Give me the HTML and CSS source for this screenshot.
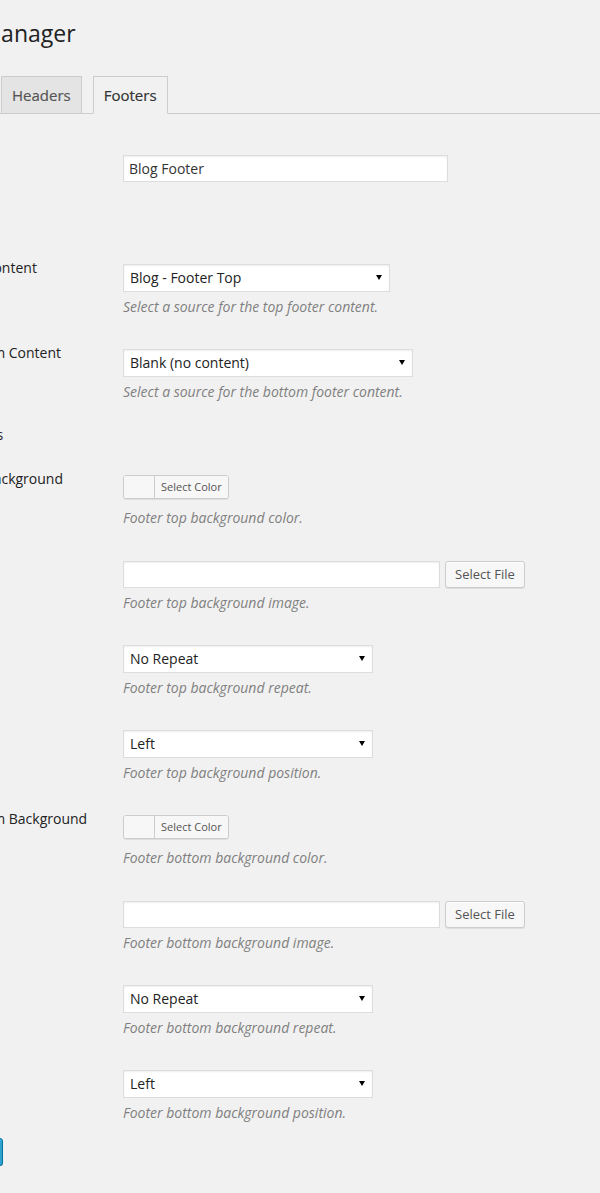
FILE: index.html
```html
<!DOCTYPE html>
<html lang="en">
<head>
<meta charset="utf-8">
<title>Layout Manager</title>
<link rel="stylesheet" href="styles.css">
</head>
<body>
<div class="wrap">
  <h1 class="title">Layout Manager</h1>
  <nav class="tabs">
    <a class="tab">Headers</a>
    <a class="tab tab-active">Footers</a>
  </nav>

  <div class="form">
    <div class="row">
      <div class="label">Title</div>
      <div class="field">
        <input class="text w-title" type="text" value="Blog Footer">
      </div>
    </div>
    <div class="row-spacer"></div>

    <div class="row">
      <div class="label">Footer Top Content</div>
      <div class="field">
        <span class="select"><select class="w-267"><option>Blog - Footer Top</option></select></span>
        <p class="desc">Select a source for the top footer content.</p>
      </div>
    </div>
    <div class="row">
      <div class="label">Footer Bottom Content</div>
      <div class="field">
        <span class="select"><select class="w-290"><option>Blank (no content)</option></select></span>
        <p class="desc">Select a source for the bottom footer content.</p>
      </div>
    </div>

    <div class="row row-heading">
      <div class="label">Footer Images</div>
    </div>

    <div class="row">
      <div class="label">Footer Top Background</div>
      <div class="field">
        <div class="color-btn"><span class="swatch"></span><span class="color-text">Select Color</span></div>
        <p class="desc desc-color">Footer top background color.</p>
      </div>
    </div>
    <div class="row">
      <div class="label">Image</div>
      <div class="field">
        <div class="file"><input class="text w-file" type="text" value=""><button class="btn">Select File</button></div>
        <p class="desc">Footer top background image.</p>
      </div>
    </div>
    <div class="row">
      <div class="label">Repeat</div>
      <div class="field">
        <span class="select"><select class="w-250"><option>No Repeat</option></select></span>
        <p class="desc">Footer top background repeat.</p>
      </div>
    </div>
    <div class="row">
      <div class="label">Position</div>
      <div class="field">
        <span class="select"><select class="w-250"><option>Left</option></select></span>
        <p class="desc">Footer top background position.</p>
      </div>
    </div>

    <div class="row">
      <div class="label">Footer Bottom Background</div>
      <div class="field">
        <div class="color-btn"><span class="swatch"></span><span class="color-text">Select Color</span></div>
        <p class="desc desc-color">Footer bottom background color.</p>
      </div>
    </div>
    <div class="row">
      <div class="label">Image</div>
      <div class="field">
        <div class="file"><input class="text w-file" type="text" value=""><button class="btn">Select File</button></div>
        <p class="desc">Footer bottom background image.</p>
      </div>
    </div>
    <div class="row">
      <div class="label">Repeat</div>
      <div class="field">
        <span class="select"><select class="w-250"><option>No Repeat</option></select></span>
        <p class="desc">Footer bottom background repeat.</p>
      </div>
    </div>
    <div class="row">
      <div class="label">Position</div>
      <div class="field">
        <span class="select"><select class="w-250"><option>Left</option></select></span>
        <p class="desc">Footer bottom background position.</p>
      </div>
    </div>
  </div>

  <div class="submit">
    <button class="btn-primary">Save Changes</button>
  </div>
</div>
</body>
</html>
```

FILE: styles.css
```css
* { box-sizing: border-box; }

html, body {
  margin: 0;
  padding: 0;
  background: #f1f1f1;
}

body {
  font-family: "Open Sans", "Liberation Sans", sans-serif;
  font-size: 14px;
  color: #222;
  overflow: hidden;
}

.wrap {
  margin-left: -90px;
  width: 700px;
}

.title {
  margin: 0 0 0 -8px;
  padding-top: 19px;
  font-size: 23px;
  line-height: 29px;
  font-weight: 400;
  color: #222;
  white-space: nowrap;
}

.tabs {
  display: flex;
  align-items: flex-end;
  gap: 11px;
  margin-top: 28px;
  padding-left: 91px;
  border-bottom: 1px solid #ccc;
}

.tab {
  display: block;
  padding: 6px 10px;
  font-size: 15px;
  line-height: 24px;
  font-weight: 400;
  color: #555;
  background: #e4e4e4;
  border: 1px solid #ccc;
  border-bottom: none;
  text-decoration: none;
  -webkit-text-stroke: 0.2px currentColor;
}

.tab-active {
  background: #f1f1f1;
  color: #333;
  border-bottom: 1px solid #f1f1f1;
  margin-bottom: -1px;
}

.form {
  margin-top: 26px;
}

.row {
  display: flex;
  padding: 15px 0;
}

.row-spacer {
  height: 52px;
}

.row-heading {
  height: 41px;
  padding: 12px 0 0;
}

.label {
  flex: 0 0 213px;
  margin-top: -6px;
  font-size: 14px;
  line-height: 19px;
  color: #222;
  white-space: nowrap;
}

.field {
  flex: 1;
  min-width: 0;
}

.text {
  display: block;
  height: 27px;
  margin: 0;
  padding: 0 5px;
  border: 1px solid #ddd;
  border-radius: 0;
  background: #fff;
  box-shadow: inset 0 1px 2px rgba(0, 0, 0, 0.07);
  font-family: "Open Sans", "Liberation Sans", sans-serif;
  font-size: 14px;
  color: #333;
  outline: none;
}

.w-title { width: 325px; }
.w-file { width: 317px; }

.select {
  position: relative;
  display: inline-block;
  vertical-align: top;
}

.select select {
  display: block;
  height: 28px;
  margin: 0;
  padding: 0 20px 0 6px;
  border: 1px solid #ddd;
  border-radius: 0;
  background: #fff;
  box-shadow: inset 0 1px 2px rgba(0, 0, 0, 0.07);
  font-family: "Open Sans", "Liberation Sans", sans-serif;
  font-size: 14px;
  line-height: 26px;
  color: #222;
  -webkit-appearance: none;
  appearance: none;
  outline: none;
}

.select::after {
  content: "";
  position: absolute;
  right: 8px;
  top: 11px;
  width: 0;
  height: 0;
  border-left: 3px solid transparent;
  border-right: 3px solid transparent;
  border-top: 5px solid #000;
}

.w-267 { width: 267px; }
.w-290 { width: 290px; }
.w-250 { width: 250px; }

.desc {
  margin: 5px 0 3px;
  font-size: 14px;
  line-height: 19px;
  font-style: italic;
  color: #808080;
}

.desc-color {
  margin-top: 9px;
}

.color-btn {
  display: inline-flex;
  height: 24px;
  border: 1px solid #ccc;
  border-radius: 3px;
  background: #f7f7f7;
  box-shadow: 0 1px 0 rgba(0, 0, 0, 0.08);
  overflow: hidden;
  vertical-align: top;
}

.swatch {
  width: 30px;
  background: #f7f7f7;
}

.color-text {
  padding: 0 6px;
  border-left: 1px solid #ccc;
  font-size: 11px;
  line-height: 22px;
  color: #555;
  background: #f7f7f7;
}

.file {
  display: flex;
  align-items: center;
  gap: 5px;
  height: 28px;
}

.btn {
  height: 27px;
  margin: 0;
  padding: 0 9px 1px;
  border: 1px solid #ccc;
  border-radius: 3px;
  background: #f7f7f7;
  box-shadow: inset 0 1px 0 #fff, 0 1px 0 rgba(0, 0, 0, 0.08);
  font-family: "Open Sans", "Liberation Sans", sans-serif;
  font-size: 13px;
  line-height: 25px;
  color: #555;
}

.submit {
  margin-top: -2px;
}

.btn-primary {
  display: block;
  width: 106px;
  height: 28px;
  margin: 0 0 0 -13px;
  padding: 0 10px 1px;
  border: 1px solid #0074a2;
  border-radius: 3px;
  background: #2ea2cc;
  box-shadow: inset 0 1px 0 rgba(120, 200, 230, 0.5), 0 1px 0 rgba(0, 0, 0, 0.15);
  font-family: "Open Sans", "Liberation Sans", sans-serif;
  font-size: 13px;
  line-height: 26px;
  color: #fff;
}
```
